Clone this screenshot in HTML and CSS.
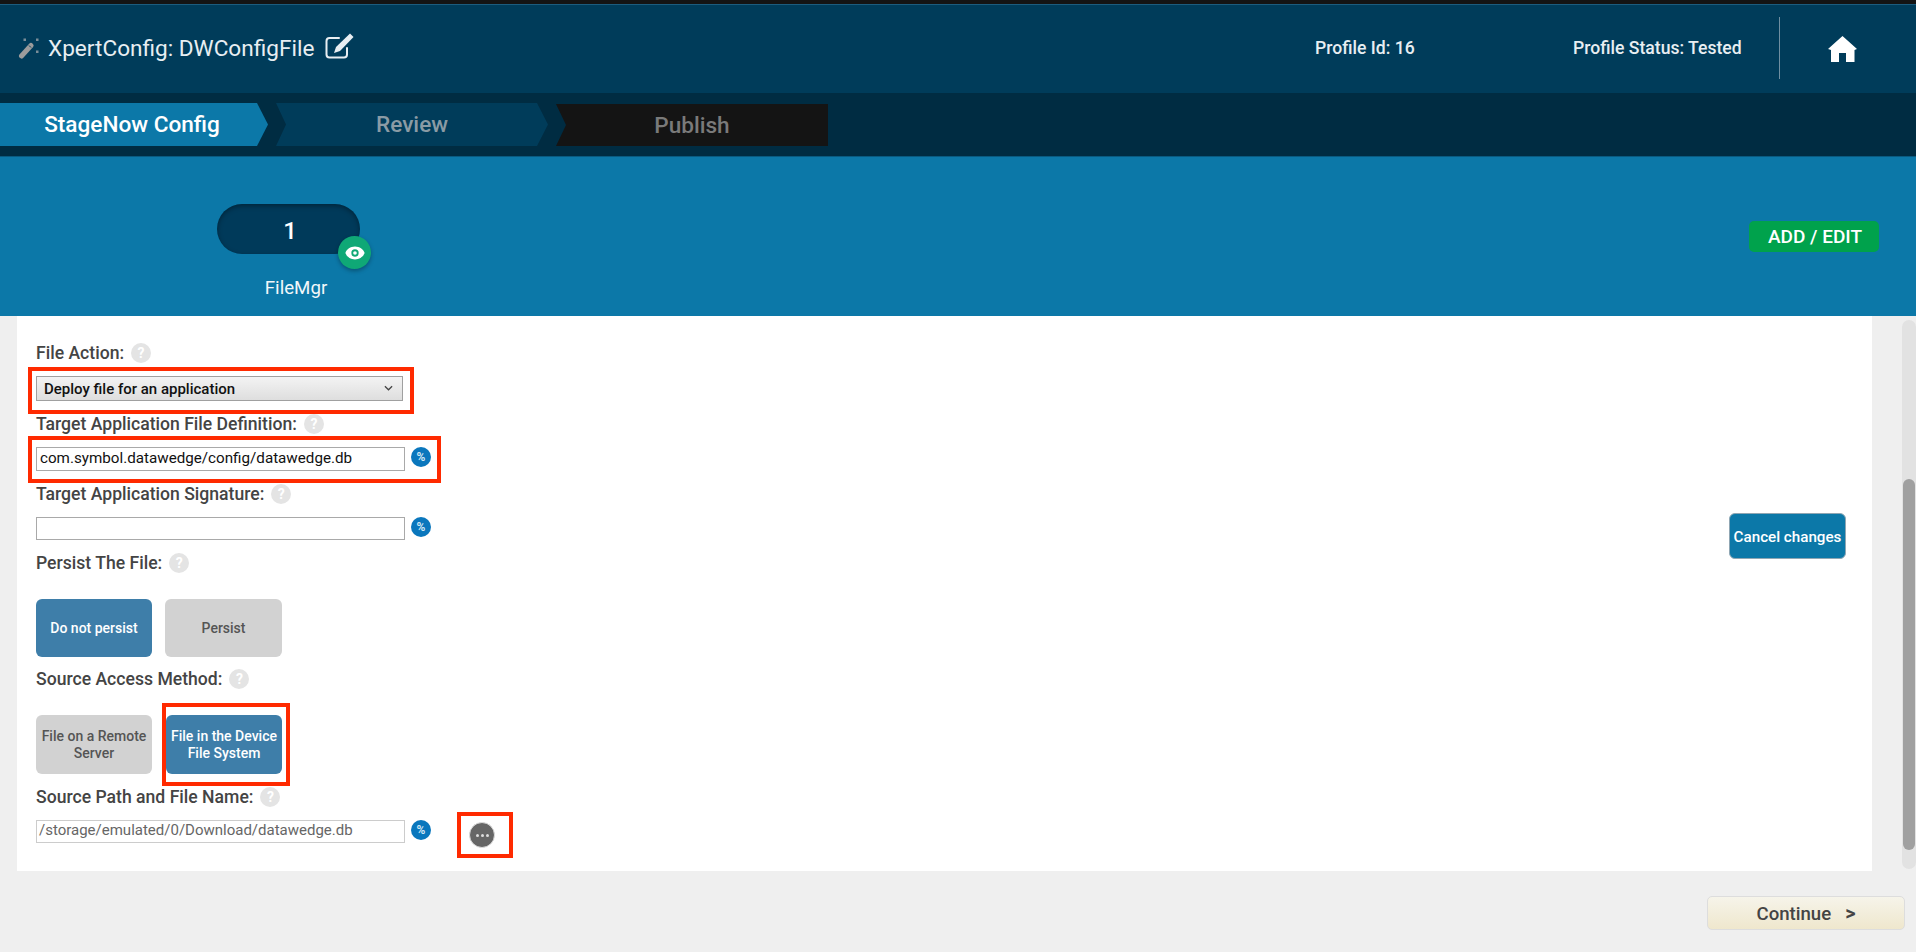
FILE: index.html
```html
<!DOCTYPE html>
<html lang="en">
<head>
<meta charset="utf-8">
<title>XpertConfig</title>
<link rel="stylesheet" href="styles.css">
</head>
<body>
<div class="topline"></div>
<header class="header">
  <div class="title">
    <svg class="wand" viewBox="0 0 24 24"><path fill="none" stroke="#9c9c9c" stroke-width="5" stroke-linecap="round" d="M3.500 20L13 9.500"/><path fill="none" stroke="#003c5a" stroke-width="1" d="M11 9.500l2 2"/><path fill="#7b8d98" d="M5.500 2.500h2.500V5H5.500zM18 2.500h2.500V5H18zM18 14.500h2.500V17H18z"/></svg>
    <span class="title-text">XpertConfig: DWConfigFile</span>
    <svg class="edit" viewBox="0 0 29 26"><path fill="none" stroke="#e8eef2" stroke-width="2" stroke-linecap="round" d="M14 5H4.500a3 3 0 0 0-3 3v13.500a3 3 0 0 0 3 3H19a3 3 0 0 0 3-3V15"/><path fill="#e8eef2" d="M25 .5l3.500 3.500L15 18l-6 2 2-6z"/></svg>
  </div>
  <div class="profile-id">Profile Id: 16</div>
  <div class="profile-status">Profile Status: Tested</div>
  <div class="divider"></div>
  <svg class="home" viewBox="0 0 30 26"><path fill="#fff" d="M14.500 0L29 13l-2.500 1v12H18v-9h-7v9H3V14L0 13z"/></svg>
</header>
<nav class="steps">
  <div class="step step-active">StageNow Config</div>
  <div class="step step-mid">Review</div>
  <div class="step step-last">Publish</div>
</nav>
<section class="band">
  <div class="node">
    <div class="pill">1
      <span class="badge"><svg viewBox="0 0 24 24"><path fill="#fff" fill-rule="evenodd" d="M12 5C7 5 3 8 1.500 12 3 16 7 19 12 19s9-3 10.500-7C21 8 17 5 12 5zm0 11a4 4 0 1 1 0-8 4 4 0 0 1 0 8z"/><circle cx="12" cy="12" r="2" fill="#fff"/></svg></span>
    </div>
    <div class="node-label">FileMgr</div>
  </div>
  <button class="add-edit">ADD / EDIT</button>
</section>
<main class="main">
  <div class="form">
    <div class="fields">
      <div class="label"><span>File Action:</span><i class="help">?</i></div>
      <div class="row row-select">
        <div class="select"><span>Deploy file for an application</span><svg viewBox="0 0 10 6"><path d="M1 1l4 4 4-4" fill="none" stroke="#444" stroke-width="1.400"/></svg></div>
      </div>
      <div class="label"><span>Target Application File Definition:</span><i class="help">?</i></div>
      <div class="row mark-input">
        <div class="input">com.symbol.datawedge/config/datawedge.db</div><i class="pct">%</i>
      </div>
      <div class="label"><span>Target Application Signature:</span><i class="help">?</i></div>
      <div class="row row-plain">
        <div class="input input-short"></div><i class="pct">%</i>
      </div>
      <div class="label"><span>Persist The File:</span><i class="help">?</i></div>
      <div class="choices">
        <button class="choice on">Do not persist</button>
        <button class="choice choice-wide">Persist</button>
      </div>
      <div class="label"><span>Source Access Method:</span><i class="help">?</i></div>
      <div class="choices choices-tall">
        <button class="choice">File on a Remote Server</button>
        <div class="mark-choice"><button class="choice on">File in the Device File System</button></div>
      </div>
      <div class="label"><span>Source Path and File Name:</span><i class="help">?</i></div>
      <div class="row row-plain">
        <div class="input input-short input-off">/storage/emulated/0/Download/datawedge.db</div><i class="pct">%</i>
        <div class="mark-more"><span class="more"><b></b><b></b><b></b></span></div>
      </div>
    </div>
    <button class="cancel">Cancel changes</button>
  </div>
  <div class="track"><div class="thumb"></div></div>
</main>
<footer class="footer"><button class="continue">Continue<span>&gt;</span></button></footer>
</body>
</html>
```
FILE: styles.css
```css
*, *::after { box-sizing: border-box; }
html, body { margin: 0; height: 952px; overflow: hidden; }
body { background: #efefef; font-family: Roboto, "Liberation Sans", sans-serif; color: #444; }
button { font-family: inherit; }
i { font-style: normal; }

.topline { height: 5px; background: #141414; border-bottom: 1px solid #1c5c7e; }

.header { height: 88px; background: #003c5a; display: flex; align-items: center; color: #e8eef2; }
.title { display: flex; align-items: center; width: 1315px; padding-left: 18px; margin-top: -2px; }
.wand { width: 24px; height: 24px; margin-right: 6px; }
.title-text { font-size: 22.600px; }
.edit { width: 29px; height: 26px; margin-left: 11px; margin-top: -4px; }
.profile-id { width: 258px; font-size: 17.600px; font-weight: 500; margin-top: -2px; }
.profile-status { width: 206px; font-size: 17.600px; font-weight: 500; margin-top: -2px; }
.divider { width: 1px; height: 62px; background: #6f8fa1; margin-top: -3px; }
.home { width: 30px; height: 26px; margin-left: 48px; margin-top: -1px; }

.steps { height: 64px; background: #002c42; border-bottom: 1px solid #0a5a80; display: flex; padding-top: 10px; align-items: flex-start; }
.step { width: 272px; height: 43px; margin-right: 8px; display: flex; align-items: center; justify-content: center; font-size: 22.600px; font-weight: 500; color: #8a9ba5; background: #003c5a; }
.step-active { width: 268px; background: #0c78a8; color: #fff; clip-path: polygon(0 0, 257px 0, 268px 21.500px, 257px 100%, 0 100%); padding-right: 4px; }
.step-mid { clip-path: polygon(0 0, 261px 0, 272px 21.500px, 261px 100%, 0 100%, 10px 21.500px); }
.step-last { background: #141414; color: #7a7a7a; margin-right: 0; height: 42px; margin-top: 1px; clip-path: polygon(0 0, 100% 0, 100% 100%, 0 100%, 10px 21px); }

.band { height: 159px; background: #0c78a8; display: flex; justify-content: space-between; align-items: flex-start; padding: 47px 37px 0 217px; }
.node { width: 143px; display: flex; flex-direction: column; align-items: center; }
.pill { width: 143px; height: 50px; border-radius: 25px; background: #003a5a; box-shadow: inset 0 2px 5px rgba(0,0,0,.35); color: #fff; font-size: 24px; font-weight: 500; padding: 3px 0 0 3px; display: flex; align-items: center; justify-content: center; position: relative; }
.badge { position: absolute; left: 121px; top: 32px; width: 33px; height: 33px; border-radius: 50%; background: #0fa876; box-shadow: 0 2px 4px rgba(0,0,0,.3); display: flex; align-items: center; justify-content: center; }
.badge svg { width: 22px; height: 22px; }
.node-label { margin-top: 24px; margin-left: 15px; font-size: 18.700px; color: #f2f7fa; line-height: 20px; }
.add-edit { width: 130px; height: 31px; margin-top: 17px; background: #00a24c; color: #fff; border: 0; border-radius: 5px; font-size: 19px; font-weight: 500; padding: 0 0 0 2px; }

.main { display: flex; height: 555px; padding-left: 17px; }
.form { width: 1855px; background: #fff; display: flex; justify-content: space-between; align-items: flex-start; padding: 27px 26px 0 19px; }
.fields { display: flex; flex-direction: column; }
.label { height: 20px; display: flex; align-items: center; font-size: 17.600px; font-weight: 500; color: #444; }
.help { width: 20px; height: 20px; margin-left: 7px; border-radius: 50%; background: #e4e4e4; color: #fff; font-size: 14px; font-weight: 700; display: flex; align-items: center; justify-content: center; }

.row { display: flex; align-items: flex-start; position: relative; }
.row-select { margin: 13px 0; width: 367px; height: 25px; }
.row-select::after { content: ""; position: absolute; left: -8px; right: -11px; top: -9px; bottom: -13px; border: 4px solid #ff2a00; }
.select { width: 367px; height: 25px; border: 1px solid #a0a0a0; background: linear-gradient(#f3f3f3, #dedede); color: #111; font-size: 15px; font-weight: 500; display: flex; align-items: center; justify-content: space-between; padding: 0 7px; }
.select svg { width: 9px; height: 6px; margin-top: -2px; margin-right: 2px; }
.mark-input { margin: 13px 0; }
.mark-input::after { content: ""; position: absolute; left: -8px; top: -11px; width: 413px; height: 47px; border: 4px solid #ff2a00; }
.row-plain { margin: 13px 0; }
.input { width: 369px; height: 24px; border: 1px solid #a9a9a9; font-size: 15.200px; color: #111; padding: 0 3px; line-height: 20px; background: #fff; }
.input-short { height: 23px; }
.input-off { border-color: #ccc; color: #666; font-size: 15px; padding: 0 2px; line-height: 19px; }
.pct { width: 20px; height: 20px; margin-left: 6px; border-radius: 50%; background: #0a77bd; color: #cfe6f5; font-size: 12px; font-weight: 700; display: flex; align-items: center; justify-content: center; }

.choices { display: flex; gap: 13px; margin: 26px 0 12px; }
.choices-tall { margin-bottom: 13px; gap: 14px; }
.choices-tall .choice { height: 59px; }
.choice { width: 116px; height: 58px; border: 0; border-radius: 6px; background: #d2d2d2; color: #555; font-size: 14px; font-weight: 500; line-height: 17px; padding: 0 2px; }
.choice-wide { width: 117px; }
.choice.on { background: #3e7ea9; color: #fff; }
.mark-choice { position: relative; }
.mark-choice::after { content: ""; position: absolute; left: -4px; top: -12px; width: 128px; height: 83px; border: 4px solid #ff2a00; pointer-events: none; }

.mark-more { position: relative; margin-left: 26px; width: 0; height: 0; }
.mark-more::after { content: ""; position: absolute; left: 0; top: -8px; width: 56px; height: 46px; border: 4px solid #ff2a00; }
.more { position: absolute; left: 12px; top: 2px; width: 26px; height: 26px; border-radius: 50%; background: #666; border: 1px solid #ddd; display: flex; align-items: center; justify-content: center; gap: 2px; }
.more b { width: 3px; height: 3px; border-radius: 50%; background: #ddd; }

.cancel { width: 117px; height: 46px; margin-top: 170px; background: #0c78a8; border: 1px solid #8fa6b3; border-radius: 6px; color: #fff; font-size: 15.200px; font-weight: 500; padding: 1px 0 0; }

.track { width: 14px; height: 549px; margin-left: 30px; margin-top: 4px; background: #e2e2e2; border-radius: 7px; padding: 0 1px; overflow: hidden; }
.thumb { width: 12px; height: 371px; margin-top: 159px; border-radius: 6px; background: #a0a0a0; }

.footer { display: flex; justify-content: flex-end; padding: 25px 11px 0 0; }
.continue { width: 198px; height: 34px; border: 1px solid #ddd; border-radius: 5px; background: linear-gradient(#f6f4ea, #efe7cd); font-size: 18.600px; font-weight: 500; color: #444; padding: 0; }
.continue span { margin-left: 14px; font-weight: 700; font-size: 20px; }
```
